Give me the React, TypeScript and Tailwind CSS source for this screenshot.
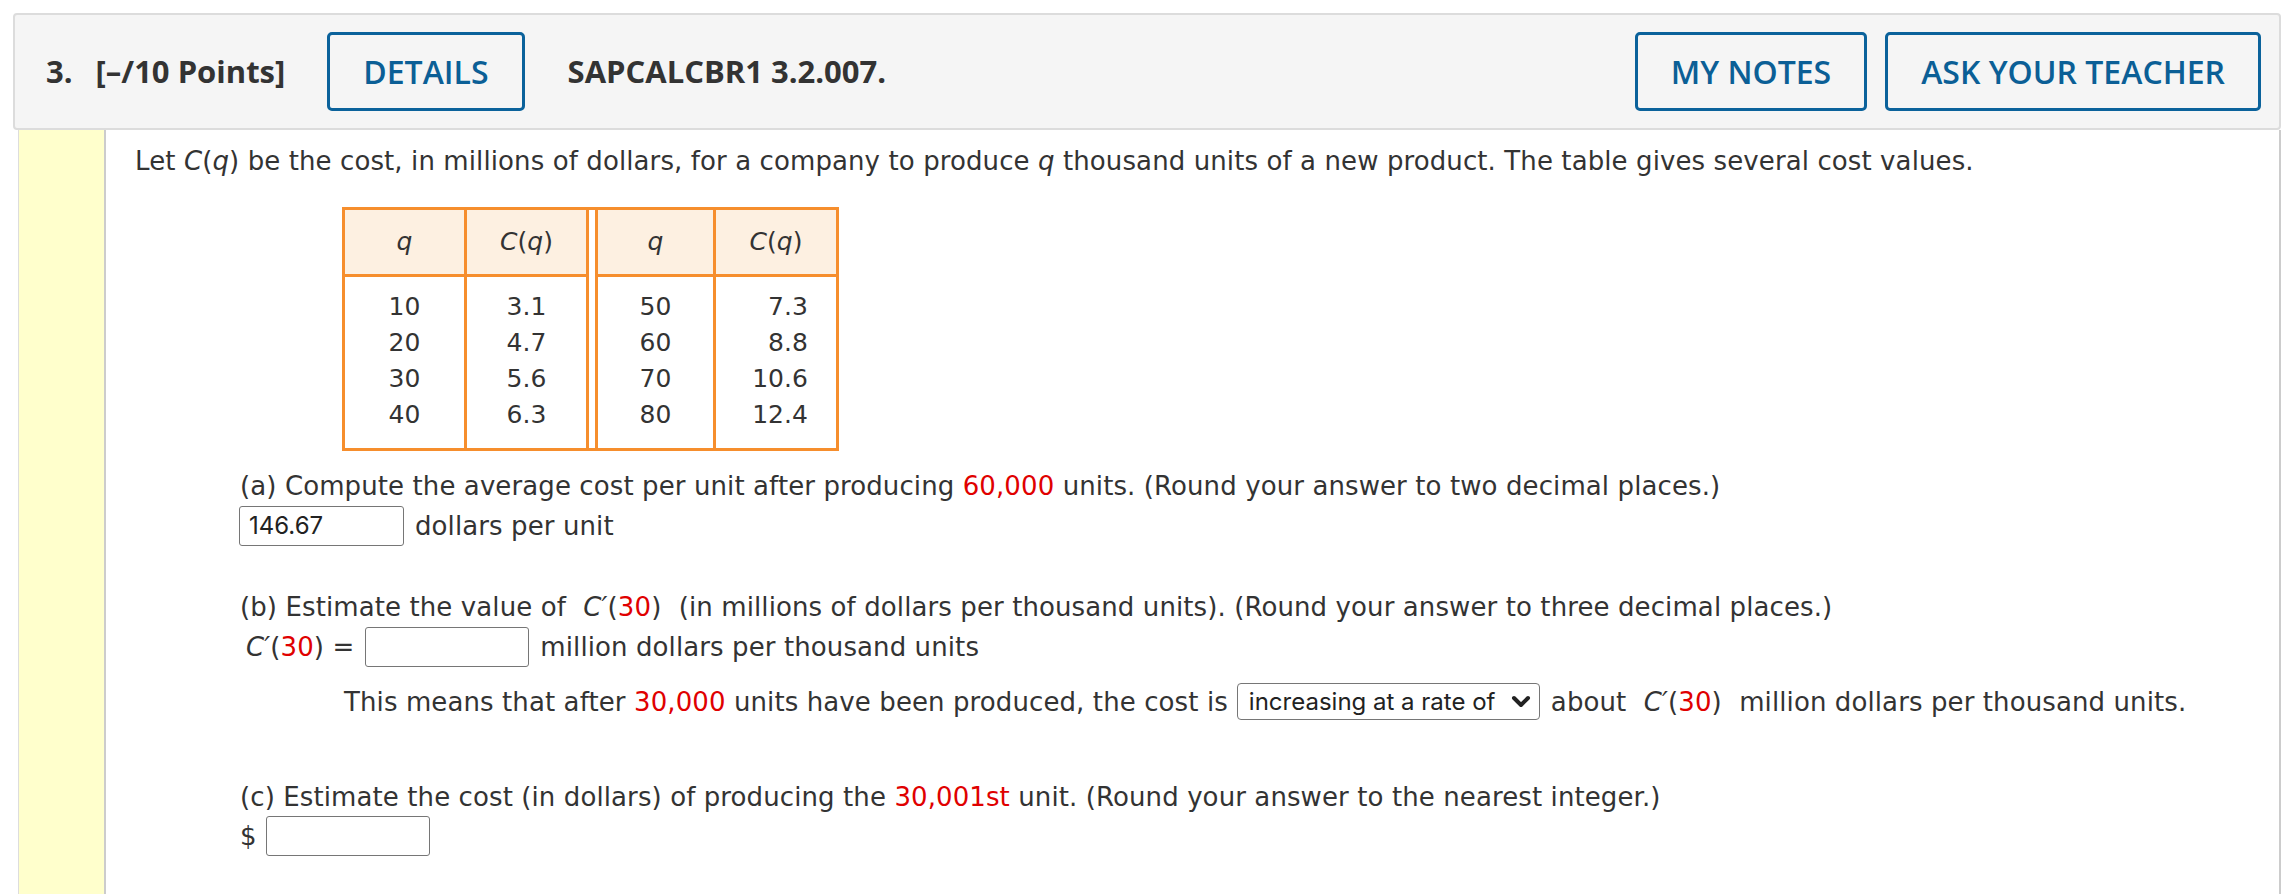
import React from "react";

const Red = ({ children }: { children: React.ReactNode }) => (
  <span className="text-[#e00000]">{children}</span>
);

const Cq = () => (
  <span>
    <i>C</i>(<i>q</i>)
  </span>
);

const CPrime = () => (
  <span>
    <i>C′</i>(<Red>30</Red>)
  </span>
);

function Column({
  head,
  values,
  className,
  align = "center",
}: {
  head: React.ReactNode;
  values: string[];
  className?: string;
  align?: "center" | "right";
}) {
  return (
    <div className={"flex flex-col " + (className ?? "")}>
      <div className="h-[67px] bg-[#fdf0e1] border-b-[3px] border-[#f68e2d] flex items-center justify-center">
        {head}
      </div>
      <div className="flex-1 flex justify-center pt-[12px] pb-[15px]">
        <div className={align === "right" ? "flex flex-col items-end pl-[8px]" : "flex flex-col items-center"}>
          {values.map((v) => (
            <div key={v} className="h-[36px] leading-[36px]">
              {v}
            </div>
          ))}
        </div>
      </div>
    </div>
  );
}

function Btn({ children }: { children: React.ReactNode }) {
  return (
    <div className="h-[79px] px-[33px] border-[3px] border-[#0b629b] rounded-[5px] flex items-center text-[#0b5f96] text-[32px] font-semibold whitespace-nowrap">
      {children}
    </div>
  );
}

function Input({ value, w = 165 }: { value?: string; w?: number }) {
  return (
    <div
      className="h-[40px] border-[1.5px] border-[#767676] rounded-[3px] bg-white flex items-center pl-[9px] font-['Inter',sans-serif] text-[24px] leading-none tracking-normal text-[#222]"
      style={{ width: w }}
    >
      {value}
    </div>
  );
}

export default function App() {
  return (
    <div className="h-[894px] overflow-hidden bg-white px-[13px] pt-[13px] flex flex-col text-[#333]">
      <header className="h-[117px] shrink-0 rounded-[4px] border-2 border-[#dcdcdc] bg-[#f5f5f5] flex items-center pl-[31px] pr-[18px] font-['Open_Sans',sans-serif]">
        <span className="text-[#333] text-[31px] font-bold">3.</span>
        <span className="ml-[23px] mr-[42px] text-[#333] text-[31px] font-bold">[–/10 Points]</span>
        <Btn>DETAILS</Btn>
        <span className="ml-[43px] text-[#333] text-[31px] font-bold">SAPCALCBR1 3.2.007.</span>
        <div className="flex-1" />
        <Btn>MY NOTES</Btn>
        <div className="w-[18px]" />
        <Btn>ASK YOUR TEACHER</Btn>
      </header>
      <div className="flex flex-1 ml-[5px]">
        <div className="w-[88px] shrink-0 bg-[#ffffcc] border-l border-l-[#dddddd] border-r-2 border-r-[#cccccc]" />
        <main className="flex-1 border-r-2 border-[#cccccc] pl-[29px] pt-[15px] font-['DejaVu_Sans',sans-serif] text-[26px] leading-[32px] tracking-[0.1px] text-[#333]">
          <p>
            Let <Cq /> be the cost, in millions of dollars, for a company to produce <i>q</i> thousand units of a new
            product. The table gives several cost values.
          </p>

          <div className="mt-[30px] ml-[207px] w-fit flex border-[3px] border-[#f68e2d] text-[25px] tracking-normal">
            <Column head={<i>q</i>} values={["10", "20", "30", "40"]} className="w-[122px] border-r-[3px] border-[#f68e2d]" />
            <Column head={<Cq />} values={["3.1", "4.7", "5.6", "6.3"]} className="w-[122px] border-r-[3px] border-[#f68e2d]" />
            <div className="w-[6px] bg-white" />
            <Column head={<i>q</i>} values={["50", "60", "70", "80"]} className="w-[121px] border-l-[3px] border-r-[3px] border-[#f68e2d]" />
            <Column head={<Cq />} values={["7.3", "8.8", "10.6", "12.4"]} className="w-[120px]" align="right" />
          </div>

          <div className="ml-[105px] mt-[19px]">
            <p>
              (a) Compute the average cost per unit after producing <Red>60,000</Red> units. (Round your answer to two
              decimal places.)
            </p>
            <div className="mt-[4px] flex items-center gap-[11px] -ml-[1px]">
              <Input value="146.67" />
              <span>dollars per unit</span>
            </div>

            <p className="mt-[45px]">
              (b) Estimate the value of <span className="mx-[9px]"><CPrime /></span> (in millions of dollars per thousand
              units). (Round your answer to three decimal places.)
            </p>
            <div className="mt-[4px] flex items-center gap-[11px]">
              <span className="pl-[6px]">
                <CPrime /> =
              </span>
              <Input w={164} />
              <span>million dollars per thousand units</span>
            </div>

            <div className="mt-[16px] ml-[104px] flex items-center">
              <span className="whitespace-nowrap">
                This means that after <Red>30,000</Red> units have been produced, the cost is
              </span>
              <div className="ml-[9px] mr-[11px] shrink-0 w-[303px] h-[37px] border-[1.5px] border-[#767676] rounded-[4px] flex items-center justify-between pl-[11px] pr-[7px] font-['Inter',sans-serif] text-[24px] leading-none tracking-normal text-[#222]">
                <span className="whitespace-nowrap">increasing at a rate of</span>
                <svg width="22" height="14" viewBox="0 0 22 14">
                  <polyline points="4,3 11,10 18,3" fill="none" stroke="#222" strokeWidth="4" strokeLinecap="round" strokeLinejoin="round" />
                </svg>
              </div>
              <span className="whitespace-nowrap">
                about <span className="mx-[9px]"><CPrime /></span> million dollars per thousand units.
              </span>
            </div>

            <p className="mt-[61px]">
              (c) Estimate the cost (in dollars) of producing the <Red>30,001st</Red> unit. (Round your answer to the
              nearest integer.)
            </p>
            <div className="mt-[3px] flex items-center gap-[9px]">
              <span>$</span>
              <Input w={164} />
            </div>
          </div>
        </main>
      </div>
    </div>
  );
}
